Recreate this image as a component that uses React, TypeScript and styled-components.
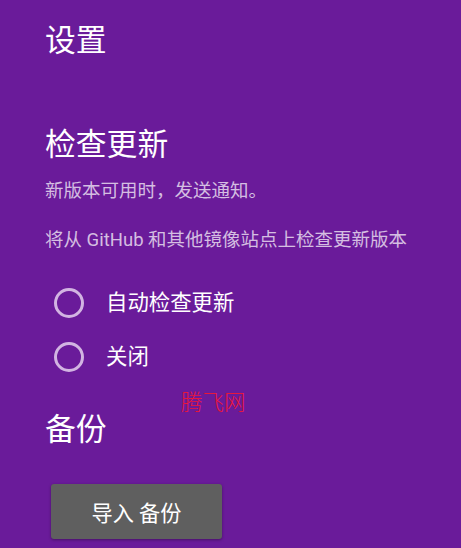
import React from "react";
import styled, { createGlobalStyle } from "styled-components";

const GlobalStyle = createGlobalStyle`
  html, body {
    margin: 0;
    padding: 0;
    background: #6a1b9a;
  }
  body {
    font-family: Roboto, "Noto Sans CJK SC", sans-serif;
    color: #ffffff;
  }
`;

const Page = styled.div`
  position: relative;
  box-sizing: border-box;
  width: 461px;
  height: 548px;
  overflow: hidden;
  padding: 23px 0 0 45px;
  background: #6a1b9a;
  display: flex;
  flex-direction: column;
`;

const Heading = styled.h2<{ $gap: number }>`
  margin: ${(p) => p.$gap}px 0 0 0;
  font-size: 30.8px;
  line-height: 36px;
  font-weight: 400;
  color: #ffffff;
`;

const Summary = styled.p<{ $gap: number }>`
  margin: ${(p) => p.$gap}px 0 0 0;
  font-size: 18.5px;
  line-height: 24px;
  color: rgba(255, 255, 255, 0.72);
`;

const RadioGroup = styled.div`
  margin-top: 24px;
  display: flex;
  flex-direction: column;
`;

const RadioRow = styled.label`
  height: 54px;
  display: flex;
  align-items: center;
  gap: 22px;
  padding-left: 9px;
  cursor: pointer;
`;

const RadioCircle = styled.span`
  width: 24px;
  height: 24px;
  border: 3px solid #d2b4e2;
  border-radius: 50%;
  flex: none;
`;

const RadioLabel = styled.span`
  font-size: 21.4px;
  line-height: 28px;
  color: #ffffff;
`;

const ActionButton = styled.button`
  margin: 36px 0 0 6px;
  width: 171px;
  height: 55px;
  border: none;
  border-radius: 3px;
  background: #5f5f5f;
  color: #ffffff;
  font-family: Roboto, "Noto Sans CJK SC", sans-serif;
  font-size: 21.2px;
  box-shadow: 0 1px 3px rgba(0, 0, 0, 0.35);
  cursor: pointer;
`;

const Watermark = styled.span`
  position: absolute;
  left: 181px;
  top: 387px;
  font-family: "Noto Sans CJK SC", sans-serif;
  font-weight: 300;
  font-size: 21.5px;
  line-height: 28px;
  color: #e8173c;
  pointer-events: none;
`;

const options = ["自动检查更新", "关闭"];

export default function App() {
  return (
    <>
      <GlobalStyle />
      <Page>
        <Heading $gap={0}>设置</Heading>
        <Heading $gap={68}>检查更新</Heading>
        <Summary $gap={16}>新版本可用时，发送通知。</Summary>
        <Summary $gap={25}>将从 GitHub 和其他镜像站点上检查更新版本</Summary>
        <RadioGroup>
          {options.map((o) => (
            <RadioRow key={o}>
              <RadioCircle />
              <RadioLabel>{o}</RadioLabel>
            </RadioRow>
          ))}
        </RadioGroup>
        <Heading $gap={28}>备份</Heading>
        <ActionButton>导入 备份</ActionButton>
        <Watermark>腾飞网</Watermark>
      </Page>
    </>
  );
}
